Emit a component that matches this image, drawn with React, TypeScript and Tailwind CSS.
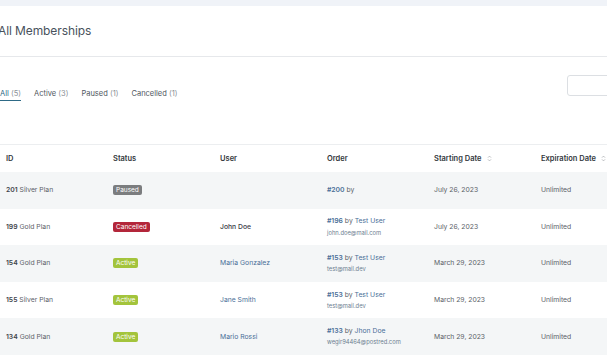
import React from 'react';

type Status = 'Paused' | 'Cancelled' | 'Active';

interface Row {
  id: string;
  plan: string;
  status: Status;
  user?: string;
  userLink?: boolean;
  order: string;
  buyer?: string;
  email?: string;
  start: string;
  expires: string;
}

const rows: Row[] = [
  { id: '201', plan: 'Silver Plan', status: 'Paused', order: '#200', start: 'July 26, 2023', expires: 'Unlimited' },
  { id: '199', plan: 'Gold Plan', status: 'Cancelled', user: 'John Doe', order: '#196', buyer: 'Test User', email: 'john.doe@mail.com', start: 'July 26, 2023', expires: 'Unlimited' },
  { id: '154', plan: 'Gold Plan', status: 'Active', user: 'Maria Gonzalez', userLink: true, order: '#153', buyer: 'Test User', email: 'test@mail.dev', start: 'March 29, 2023', expires: 'Unlimited' },
  { id: '155', plan: 'Silver Plan', status: 'Active', user: 'Jane Smith', userLink: true, order: '#153', buyer: 'Test User', email: 'test@mail.dev', start: 'March 29, 2023', expires: 'Unlimited' },
  { id: '134', plan: 'Gold Plan', status: 'Active', user: 'Mario Rossi', userLink: true, order: '#133', buyer: 'Jhon Doe', email: 'wegir94464@postred.com', start: 'March 29, 2023', expires: 'Unlimited' },
];

const badgeClass: Record<Status, string> = {
  Paused: 'bg-[#7b7d7f]',
  Cancelled: 'bg-[#b3263a]',
  Active: 'bg-[#a3c43c]',
};

function SortIcon() {
  return (
    <svg className="w-[5px] h-[7px] ml-[5px]" viewBox="0 0 5 7" fill="none" stroke="#a8acb0" strokeWidth="0.8">
      <path d="M1 2.6 L2.5 1.1 L4 2.6" />
      <path d="M1 4.4 L2.5 5.9 L4 4.4" />
    </svg>
  );
}

const tabs = [
  { label: 'All', count: 5, active: true },
  { label: 'Active', count: 3 },
  { label: 'Paused', count: 1 },
  { label: 'Cancelled', count: 1 },
];

export default function App() {
  return (
    <div className="w-[607px] h-[355px] overflow-hidden bg-white font-['Inter',sans-serif]">
      <div className="h-[6px] bg-[#f0f3f8]" />

      {/* title */}
      <div className="h-[51px] flex items-center border-b border-[#e6e8eb]">
        <h1 className="ml-[-2px] text-[12px] text-[#48525c] tracking-[-0.1px]">All Memberships</h1>
      </div>

      {/* tabs + search */}
      <div className="h-[87px] flex justify-between items-start pt-[18px]">
        <nav className="flex items-center gap-[13px] mt-[13px] text-[7.5px]">
          {tabs.map((tab) => (
            <span
              key={tab.label}
              className={`pb-[1px] border-b-[1.5px] ${
                tab.active ? 'text-[#2e6a86] border-[#2e6a86]' : 'text-[#50575e] border-transparent'
              }`}
            >
              {tab.label} <span className="text-[#8a9096]">({tab.count})</span>
            </span>
          ))}
        </nav>
        <div className="w-[80px] h-[21px] mr-[-40px] border border-[#dcdfe3] rounded-[3px] bg-white" />
      </div>

      {/* table */}
      <div className="border-t border-[#eceef0]">
        <div className="grid grid-cols-[107px_107px_107px_107px_107px_107px] h-[27px] items-center text-[7.5px] font-semibold text-[#32373c]">
          <div className="pl-[6px]">ID</div>
          <div className="pl-[6px]">Status</div>
          <div className="pl-[6px]">User</div>
          <div className="pl-[6px]">Order</div>
          <div className="pl-[6px] flex items-center">Starting Date<SortIcon /></div>
          <div className="pl-[6px] flex items-center whitespace-nowrap">Expiration Date<SortIcon /></div>
        </div>

        {rows.map((row, i) => (
          <div
            key={row.id}
            className={`grid grid-cols-[107px_107px_107px_107px_107px_107px] h-[36.6px] items-center text-[6.8px] text-[#5b6168] ${
              i % 2 === 0 ? 'bg-[#f4f6f7]' : 'bg-white'
            }`}
          >
            <div className="pl-[6px]">
              <span className="font-semibold text-[#3f454b]">{row.id}</span> {row.plan}
            </div>
            <div className="pl-[6px]">
              <span className={`inline-block px-[3px] leading-[10px] rounded-[2px] text-white text-[6.5px] ${badgeClass[row.status]}`}>
                {row.status}
              </span>
            </div>
            <div className={`pl-[6px] ${row.userLink ? 'text-[#4a6f98]' : 'text-[#3a4047] font-medium'}`}>{row.user}</div>
            <div className="pl-[6px] flex flex-col">
              <div>
                <span className="font-semibold text-[#4a6f98]">{row.order}</span> by{' '}
                {row.buyer && <span className="text-[#4a6f98]">{row.buyer}</span>}
              </div>
              {row.email && <div className="text-[5.8px] text-[#6d7e90] mt-[2px]">{row.email}</div>}
            </div>
            <div className="pl-[6px]">{row.start}</div>
            <div className="pl-[6px]">{row.expires}</div>
          </div>
        ))}
      </div>
    </div>
  );
}
